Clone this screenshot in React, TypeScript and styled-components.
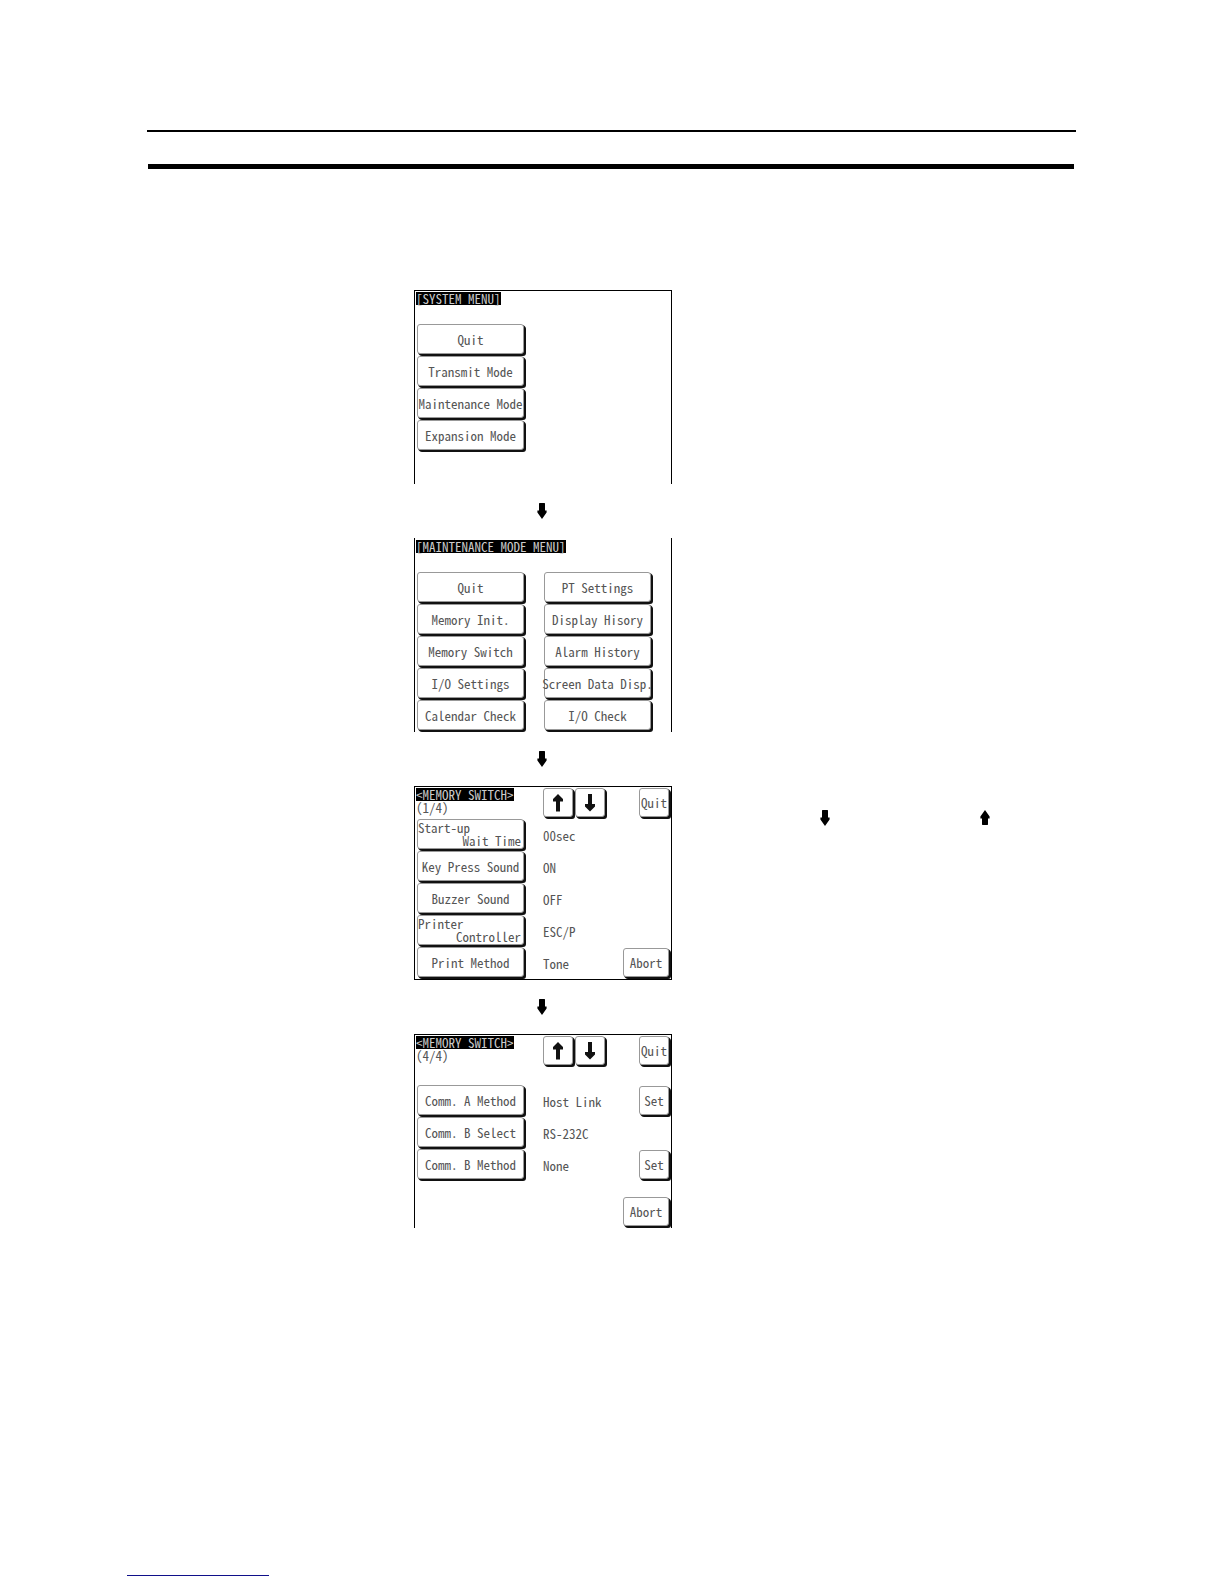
import React from "react";
import styled, { createGlobalStyle, css } from "styled-components";

const GlobalStyle = createGlobalStyle`
  * { box-sizing: border-box; }
  body { margin: 0; background: #fff; }
`;

const lcdFont = css`
  font-family: "Noto Sans Mono CJK JP", "Liberation Mono", monospace;
  font-size: 13px;
  line-height: 13px;
  color: #555;
  white-space: pre;
`;

const Page = styled.div`
  min-height: 100vh;
  display: flex;
  flex-direction: column;
`;

const Header = styled.header`
  padding: 130px 148px 0 147px;
`;

const ThinRule = styled.div`
  height: 2px;
  background: #000;
`;

const ThickRule = styled.div`
  height: 5px;
  margin: 32px 2px 0 1px;
  background: #000;
`;

const Procedure = styled.main`
  display: grid;
  grid-template-columns: minmax(0, 267px) 258px minmax(0, 1fr);
  padding: 121px 148px 0 147px;
`;

const Connector = styled.div`
  grid-column: 2;
  height: 54px;
  padding: 19px 2px 0 0;
  display: flex;
  justify-content: center;
`;

const Notes = styled.aside`
  grid-column: 3;
  padding: 24px 0 0 148px;
  display: flex;
  align-items: flex-start;
  gap: 150px;
`;

const Screen = styled.section<{ $top?: boolean; $bottom?: boolean }>`
  ${lcdFont}
  grid-column: 2;
  min-height: 194px;
  padding: ${(p) => (p.$top ? 1 : 2)}px 0 0 1px;
  border: solid #000;
  border-width: ${(p) => (p.$top ? 1 : 0)}px 1px ${(p) => (p.$bottom ? 1 : 0)}px;
  display: flex;
  flex-direction: column;
`;

const Title = styled.h2`
  margin: 0;
  font: inherit;
  align-self: flex-start;
  background: #000;
  color: #ccc;
`;

const MenuHeader = styled.div`
  height: 32px;
  display: flex;
`;

const MenuGrid = styled.div<{ $columns: number }>`
  display: grid;
  grid-template-columns: repeat(${(p) => p.$columns}, 110px);
  grid-auto-rows: 32px;
  column-gap: 17px;
`;

const Key = styled.button<{ $wide?: boolean }>`
  ${lcdFont}
  height: 29px;
  margin: 0 2px 2px 0;
  padding: 0;
  min-width: ${(p) => (p.$wide ? 46 : 30)}px;
  border: 1px solid #999;
  border-radius: 3px;
  box-shadow: 1px 1px 0 #111, 2px 2px 0 #111;
  background: #fff;
  display: flex;
  align-items: center;
  justify-content: center;
`;

const MenuKey = styled(Key)`
  width: 107px;
  height: 30px;
  margin-left: 1px;
`;

const SplitLabel = styled.span`
  flex: 1;
  display: flex;
  flex-direction: column;
  align-items: flex-start;
  & > :last-child {
    align-self: flex-end;
    padding-right: 2px;
  }
`;

const SwitchHeader = styled.div<{ $tall?: boolean }>`
  height: ${(p) => (p.$tall ? 49 : 31)}px;
  display: grid;
  grid-template-columns: 110px 1fr auto;
  column-gap: 17px;
  align-items: start;
`;

const Heading = styled.div`
  display: flex;
  flex-direction: column;
`;

const PageKeys = styled.div`
  display: flex;
`;

const SwitchRow = styled.div`
  height: 32px;
  display: grid;
  grid-template-columns: 110px 1fr auto;
  column-gap: 17px;
  align-items: center;
`;

const AbortRow = styled.div`
  margin-top: auto;
  display: flex;
  justify-content: flex-end;
`;

const Footer = styled.footer`
  margin-top: auto;
  padding: 0 127px 8px;
`;

const FooterRule = styled.div`
  width: 142px;
  height: 1px;
  background: #10108a;
`;

function StepArrow({ up = false }: { up?: boolean }) {
  return (
    <svg width="10" height="16" viewBox="0 0 10 16" aria-hidden="true">
      <path
        d={
          up
            ? "M5 0 L9.6 6.5 V8.5 H8 V14.5 L7.5 15 H2.5 L2 14.5 V8.5 H0.4 V6.5 Z"
            : "M2.5 0 H7.5 L8 .5 V7.5 H9.6 V9.5 L5 16 L.4 9.5 V7.5 H2 V.5 Z"
        }
      />
    </svg>
  );
}

function KeyArrow({ up = false }: { up?: boolean }) {
  return (
    <svg width="12" height="18" viewBox="0 0 12 18" aria-hidden="true">
      <path
        d={
          up
            ? "M6 0 L11 5 V7.5 H8 V17.5 H4 V7.5 H1 V5 Z"
            : "M4 0 H8 V10 H11 V12.5 L6 17.5 L1 12.5 V10 H4 Z"
        }
        fill="#111"
      />
    </svg>
  );
}

const systemMenu = ["Quit", "Transmit Mode", "Maintenance Mode", "Expansion Mode"];

const maintenanceMenu = [
  "Quit", "PT Settings",
  "Memory Init.", "Display Hisory",
  "Memory Switch", "Alarm History",
  "I/O Settings", "Screen Data Disp.",
  "Calendar Check", "I/O Check",
];

type Setting = { label: string | [string, string]; value: string; action?: string };

const firstPage: Setting[] = [
  { label: ["Start-up", "Wait Time"], value: "00sec" },
  { label: "Key Press Sound", value: "ON" },
  { label: "Buzzer Sound", value: "OFF" },
  { label: ["Printer", "Controller"], value: "ESC/P" },
  { label: "Print Method", value: "Tone", action: "Abort" },
];

const lastPage: Setting[] = [
  { label: "Comm. A Method", value: "Host Link", action: "Set" },
  { label: "Comm. B Select", value: "RS-232C" },
  { label: "Comm. B Method", value: "None", action: "Set" },
];

function SwitchTop({ page, tall }: { page: string; tall?: boolean }) {
  return (
    <SwitchHeader $tall={tall}>
      <Heading>
        <Title>{"<MEMORY SWITCH>"}</Title>
        <span>{page}</span>
      </Heading>
      <PageKeys>
        <Key aria-label="Previous page"><KeyArrow up /></Key>
        <Key aria-label="Next page"><KeyArrow /></Key>
      </PageKeys>
      <Key>Quit</Key>
    </SwitchHeader>
  );
}

function SettingRow({ label, value, action }: Setting) {
  return (
    <SwitchRow>
      <MenuKey>
        {typeof label === "string" ? label : (
          <SplitLabel>
            <span>{label[0]}</span>
            <span>{label[1]}</span>
          </SplitLabel>
        )}
      </MenuKey>
      <span>{value}</span>
      {action && <Key $wide={action === "Abort"}>{action}</Key>}
    </SwitchRow>
  );
}

function Menu({ items, columns }: { items: string[]; columns: number }) {
  return (
    <MenuGrid $columns={columns}>
      {items.map((name) => <MenuKey key={name}>{name}</MenuKey>)}
    </MenuGrid>
  );
}

export default function App() {
  return (
    <Page>
      <GlobalStyle />
      <Header>
        <ThinRule />
        <ThickRule />
      </Header>
      <Procedure>
        <Screen $top>
          <MenuHeader><Title>[SYSTEM MENU]</Title></MenuHeader>
          <Menu items={systemMenu} columns={1} />
        </Screen>
        <Connector><StepArrow /></Connector>
        <Screen>
          <MenuHeader><Title>[MAINTENANCE MODE MENU]</Title></MenuHeader>
          <Menu items={maintenanceMenu} columns={2} />
        </Screen>
        <Connector><StepArrow /></Connector>
        <Screen $top $bottom>
          <SwitchTop page="(1/4)" />
          {firstPage.map((row) => <SettingRow key={row.value} {...row} />)}
        </Screen>
        <Notes>
          <StepArrow />
          <StepArrow up />
        </Notes>
        <Connector><StepArrow /></Connector>
        <Screen $top>
          <SwitchTop page="(4/4)" tall />
          {lastPage.map((row) => <SettingRow key={row.value} {...row} />)}
          <AbortRow><Key $wide>Abort</Key></AbortRow>
        </Screen>
      </Procedure>
      <Footer><FooterRule /></Footer>
    </Page>
  );
}
